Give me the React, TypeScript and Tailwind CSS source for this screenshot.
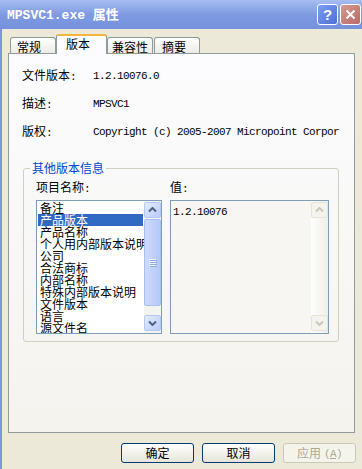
import React from 'react';

const items = ['备注', '产品版本', '产品名称', '个人用内部版本说明', '公司', '合法商标', '内部名称', '特殊内部版本说明', '文件版本', '语言', '源文件名'];

const M: React.FC<{ children: React.ReactNode }> = ({ children }) => (
  <span className="font-['Liberation_Mono',monospace] text-[11px] tracking-[-0.6px]">{children}</span>
);

const Arrow: React.FC<{ down?: boolean; color: string }> = ({ down, color }) => (
  <svg width="9" height="6" viewBox="0 0 9 6">
    <path d={down ? 'M1 1.5 L4.5 5 L8 1.5' : 'M1 4.5 L4.5 1 L8 4.5'} fill="none" stroke={color} strokeWidth="2" />
  </svg>
);

const ScrollBar: React.FC<{ disabled?: boolean }> = ({ disabled }) => {
  const btn = disabled
    ? 'h-[16px] rounded-[2px] border border-[#E6E4D8] bg-[#F4F3EE] flex items-center justify-center'
    : 'h-[16px] rounded-[2px] border border-[#B4C8F6] bg-linear-to-br from-[#E3ECFF] to-[#B9CCF8] flex items-center justify-center';
  const arrowColor = disabled ? '#C9C7BA' : '#4D6185';
  return (
    <div className={`w-[17px] flex flex-col py-[1px] ${disabled ? 'bg-linear-to-r from-[#FEFEFD] to-[#EFEEE7]' : 'bg-[#F3F3EF]'}`}>
      <div className={btn}><Arrow color={arrowColor} /></div>
      {!disabled && (
        <div className="mt-[1px] h-[87px] rounded-[2px] border border-[#A9BFF2] bg-linear-to-r from-[#CCDAFD] to-[#B5C9F8] flex items-center justify-center">
          <svg width="8" height="8" viewBox="0 0 8 8">
            {[0, 2, 4, 6].map(y => (
              <g key={y}>
                <line x1="0" y1={y + 0.5} x2="7" y2={y + 0.5} stroke="#EEF3FF" strokeWidth="1" />
                <line x1="1" y1={y + 1.5} x2="8" y2={y + 1.5} stroke="#8EA8E4" strokeWidth="1" />
              </g>
            ))}
          </svg>
        </div>
      )}
      <div className="flex-1" />
      <div className={`${btn} mb-[1px]`}><Arrow down color={arrowColor} /></div>
    </div>
  );
};

const Button: React.FC<{ children: React.ReactNode; disabled?: boolean }> = ({ children, disabled }) => (
  <div
    className={`w-[73px] h-[20px] rounded-[3px] border flex items-center justify-center ${
      disabled
        ? 'border-[#CAC8BB] bg-[#F5F4EA] text-[#ACA899]'
        : 'border-[#003C74] bg-linear-to-b from-[#FFFFFF] to-[#E6E4DA] text-black'
    }`}
  >
    {children}
  </div>
);

const App: React.FC = () => {
  return (
    <div className="w-[362px] h-[469px] overflow-hidden flex flex-col bg-[#ECE9D8] font-['Noto_Sans_CJK_SC',sans-serif] text-[12px] leading-[12px] text-black">
      {/* title bar */}
      <div className="h-[29px] shrink-0 flex items-center pl-[7px] pr-[1px] bg-linear-to-b from-[#A6BEF1] via-[#7F9AE1] to-[#7591DD]">
        <span className="text-white font-bold text-[13px] leading-[13px]">
          <span className="font-['Liberation_Mono',monospace]">MPSVC1.exe </span>属性
        </span>
        <div className="ml-auto flex gap-[2px]">
          <div className="w-[21px] h-[21px] rounded-[3px] border border-white bg-linear-to-br from-[#7F9EF0] to-[#4B6FD6] flex items-center justify-center text-white font-bold text-[15px] leading-[15px] font-['Liberation_Sans',sans-serif]">
            ?
          </div>
          <div className="w-[21px] h-[21px] rounded-[3px] border border-white bg-linear-to-br from-[#D8998F] to-[#B86A66] flex items-center justify-center">
            <svg width="11" height="11" viewBox="0 0 11 11">
              <path d="M1.5 1.5 L9.5 9.5 M9.5 1.5 L1.5 9.5" stroke="white" strokeWidth="2" />
            </svg>
          </div>
        </div>
      </div>

      <div className="flex flex-1 min-h-0">
        <div className="w-[2px] bg-[#7C95DE]" />
        <div className="flex-1 flex flex-col pl-[6px] pr-[7px]">
          {/* tabs */}
          <div className="h-[24px] flex items-end pl-[2px] relative z-10">
            <div className="w-[46px] h-[16px] border border-b-0 border-[#919B9C] rounded-t-[3px] bg-linear-to-b from-[#FFFFFF] to-[#ECEBE6] pl-[6px] pt-[3px]">常规</div>
            <div className="w-[51px] h-[20px] -mb-[1px] border-x border-[#919B9C] border-t-2 border-t-[#F6B63E] rounded-t-[3px] bg-[#FCFCFE] pl-[9px] pt-[2px]">版本</div>
            <div className="w-[46px] h-[16px] border border-b-0 border-[#919B9C] rounded-t-[3px] bg-linear-to-b from-[#FFFFFF] to-[#ECEBE6] pl-[4px] pt-[3px]">兼容性</div>
            <div className="ml-[1px] w-[46px] h-[16px] border border-b-0 border-[#919B9C] rounded-t-[3px] bg-linear-to-b from-[#FFFFFF] to-[#ECEBE6] pl-[7px] pt-[3px]">摘要</div>
          </div>

          {/* tab page */}
          <div className="h-[380px] shrink-0 border border-[#919B9C] bg-linear-to-b from-[#FCFCFE] to-[#F4F3EE] flex flex-col">
            <div className="pt-[8px] pl-[13px]">
              <div className="h-[28px] flex items-center">
                <div className="w-[71px]">文件版本<M>:</M></div>
                <M>1.2.10076.0</M>
              </div>
              <div className="h-[28px] flex items-center">
                <div className="w-[71px]">描述<M>:</M></div>
                <M>MPSVC1</M>
              </div>
              <div className="h-[28px] flex items-center whitespace-nowrap overflow-hidden">
                <div className="w-[71px] shrink-0">版权<M>:</M></div>
                <M>Copyright (c) 2005-2007 Micropoint Corpor</M>
              </div>
            </div>

            <fieldset className="mt-[16px] ml-[14px] mr-[15px] h-[180px] border border-[#D0D0BF] rounded-[3px]">
              <legend className="ml-[6px] px-[2px] text-[#0046D5] leading-[12px]">其他版本信息</legend>
              <div className="flex gap-[8px] pl-[12px] pt-[7px]">
                <div className="w-[126px] flex flex-col">
                  <div className="leading-[12px]">项目名称<M>:</M></div>
                  <div className="mt-[5px] h-[134px] border border-[#7F9DB9] bg-white flex">
                    <div className="flex-1 min-w-0 overflow-hidden pt-[1px] px-[1px]">
                      {items.map((it, i) => (
                        <div
                          key={it}
                          className={`h-[12px] leading-[12px] pl-[2px] whitespace-nowrap ${i === 1 ? 'bg-[#316AC5] text-white' : ''}`}
                        >
                          {it}
                        </div>
                      ))}
                    </div>
                    <ScrollBar />
                  </div>
                </div>
                <div className="w-[159px] flex flex-col">
                  <div className="leading-[12px]">值<M>:</M></div>
                  <div className="mt-[5px] h-[134px] border border-[#7F9DB9] bg-[#F7F6F3] flex">
                    <div className="flex-1 pl-[2px] pt-[3px] leading-[12px]">
                      <M>1.2.10076</M>
                    </div>
                    <ScrollBar disabled />
                  </div>
                </div>
              </div>
            </fieldset>
          </div>

          {/* buttons */}
          <div className="flex justify-end gap-[8px] mt-[10px] -mr-[1px]">
            <Button>确定</Button>
            <Button>取消</Button>
            <Button disabled>
              应用<span className="ml-[3px]"><M>(<span className="underline">A</span>)</M></span>
            </Button>
          </div>
        </div>
      </div>
    </div>
  );
};

export default App;
